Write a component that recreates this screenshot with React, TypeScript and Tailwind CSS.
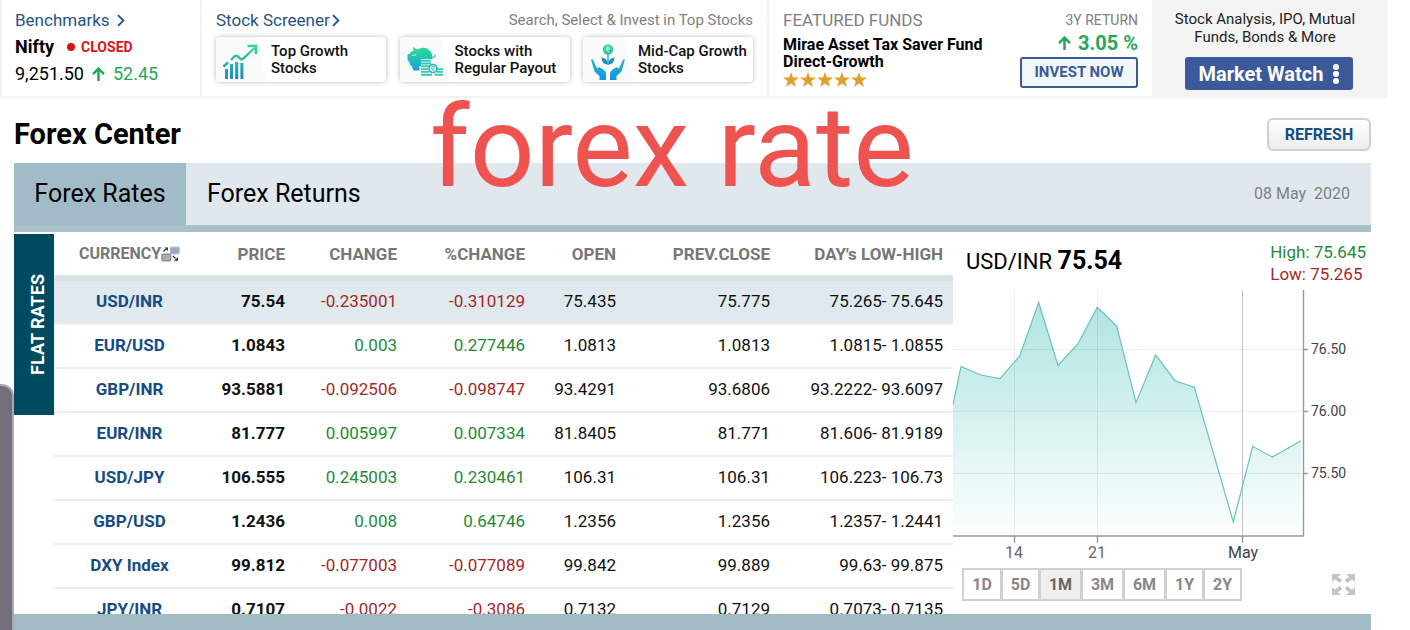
import React from "react";

type Row = [string, string, string, string, string, string, string];

const rows: Row[] = [
  ["USD/INR", "75.54", "-0.235001", "-0.310129", "75.435", "75.775", "75.265- 75.645"],
  ["EUR/USD", "1.0843", "0.003", "0.277446", "1.0813", "1.0813", "1.0815- 1.0855"],
  ["GBP/INR", "93.5881", "-0.092506", "-0.098747", "93.4291", "93.6806", "93.2222- 93.6097"],
  ["EUR/INR", "81.777", "0.005997", "0.007334", "81.8405", "81.771", "81.606- 81.9189"],
  ["USD/JPY", "106.555", "0.245003", "0.230461", "106.31", "106.31", "106.223- 106.73"],
  ["GBP/USD", "1.2436", "0.008", "0.64746", "1.2356", "1.2356", "1.2357- 1.2441"],
  ["DXY Index", "99.812", "-0.077003", "-0.077089", "99.842", "99.889", "99.63- 99.875"],
  ["JPY/INR", "0.7107", "-0.0022", "-0.3086", "0.7132", "0.7129", "0.7073- 0.7135"],
];

function Chevron() {
  return (
    <svg width="8" height="13" viewBox="0 0 8 13" fill="none" stroke="#1f5485" strokeWidth="1.8" aria-hidden="true">
      <path d="M1 1.2L6.4 6.5L1 11.8" />
    </svg>
  );
}

function UpArrow() {
  return (
    <svg width="13" height="14" viewBox="0 0 13 14" fill="none" stroke="#26a65b" strokeWidth="2.5" aria-hidden="true">
      <path d="M6.5 14V1.8M1 7.2L6.5 1.6L12 7.2" />
    </svg>
  );
}

function GrowthIcon() {
  return (
    <svg width="36" height="36" viewBox="0 0 36 36" fill="none" aria-hidden="true">
      <defs>
        <linearGradient id="growth" x1="0" y1="0" x2="0" y2="36" gradientUnits="userSpaceOnUse">
          <stop stopColor="#38dd90" />
          <stop offset="1" stopColor="#1b86cc" />
        </linearGradient>
      </defs>
      <g stroke="url(#growth)">
        <path d="M8 16L11.500 12.500Q13.500 11 15.500 13L17 14.500Q19 16.200 21 14L31.500 4" strokeWidth="2.400" />
        <path d="M24.500 2H33V10" strokeWidth="2.600" />
        <path d="M0.500 22.500L5 18.500" strokeWidth="2.400" />
        <path d="M3.500 25V35M8.500 20V35M13.700 18V35M18.900 19V35" strokeWidth="3" />
      </g>
    </svg>
  );
}

function PiggyIcon() {
  return (
    <svg width="38" height="32" viewBox="0 0 38 32" aria-hidden="true">
      <defs>
        <linearGradient id="piggy" x1="0" y1="0" x2="0" y2="25" gradientUnits="userSpaceOnUse">
          <stop stopColor="#2fe08f" />
          <stop offset="1" stopColor="#18a0dc" />
        </linearGradient>
      </defs>
      <path
        d="M6 1L10 3.500Q16 0.500 21 3Q25 5.500 25.500 11V13H14V20H12.500V24.500H6.500L5 20.500Q2.500 19 2.200 16L0.500 14V8.500L3 7.500Q4 5.500 6.500 4.500Z"
        fill="url(#piggy)"
      />
      <path d="M25 11Q28.500 12 28 8.500" stroke="#26bfa8" strokeWidth="1.200" fill="none" />
      <path d="M5 9Q7 10.500 9 8.500" stroke="#dffaf0" strokeWidth="1" fill="none" />
      <path
        d="M14 14.700H24M14 17.500H24M14 20.300H22M14 23.100H21M14 25.900H22.500M14 28.700H25M29.500 23.100H36M29.500 25.900H36M27.500 28.700H36"
        stroke="#33ccb4"
        strokeWidth="1.900"
      />
      <circle cx="26" cy="22.500" r="4" fill="#fafafa" stroke="#24bab6" strokeWidth="1.700" />
      <path d="M24.300 20.500H27.700M24.300 22.200H27.700M24.600 22.200L27 25" stroke="#25bcb4" strokeWidth="0.900" />
    </svg>
  );
}

function PlantIcon() {
  return (
    <svg width="36" height="36" viewBox="0 0 36 36" fill="none" aria-hidden="true">
      <defs>
        <linearGradient id="plant" x1="0" y1="0" x2="0" y2="36" gradientUnits="userSpaceOnUse">
          <stop stopColor="#35db93" />
          <stop offset="0.5" stopColor="#25b6b5" />
          <stop offset="1" stopColor="#1494e6" />
        </linearGradient>
      </defs>
      <circle cx="18" cy="5.500" r="5.200" fill="url(#plant)" />
      <path d="M16 3H20M16 5H20M16.300 5L19 8.500" stroke="#e6fbf3" strokeWidth="0.900" />
      <path d="M18 10V21" stroke="#25a8bd" strokeWidth="1.300" />
      <path d="M17.800 20.500Q11.500 20 11.500 13.500Q17.500 14 17.800 20.500ZM18.200 20.500Q18.500 14 24.500 13.500Q24.500 20 18.200 20.500Z" fill="#1e8fc6" />
      <g fill="url(#plant)">
        <path d="M1 15.500L3 15.500L6 22.500L7.500 24.500L9 23L13.500 25.500Q16 27.500 16 30V36H9.500V32L4.500 27.500Z" />
        <path d="M35 15.500L33 15.500L30 22.500L28.500 24.500L27 23L22.500 25.500Q20 27.500 20 30V36H26.500V32L31.500 27.500Z" />
      </g>
    </svg>
  );
}

function StockCard({ icon, lines }: { icon: React.ReactNode; lines: [string, string] }) {
  return (
    <a
      href="#"
      className="flex h-[45px] w-[170px] items-center overflow-hidden rounded bg-white text-[15px] leading-[17px] font-medium text-[#111] shadow-[0_0_5px_rgba(0,0,0,0.28)]"
    >
      <span className="flex h-full w-[55px] shrink-0 items-center bg-[#fafafa] pt-1 pl-[7px] [clip-path:polygon(0_0,75%_0,91%_100%,0_100%)]">
        {icon}
      </span>
      <span className="whitespace-nowrap">
        {lines[0]}
        <br />
        {lines[1]}
      </span>
    </a>
  );
}

function TopBar() {
  return (
    <header className="mr-[23px] flex h-[98px] shrink-0 border-b-2 border-l-2 border-[#f2f2f2]">
      <section className="w-[200px] shrink-0 border-r-2 border-[#f2f2f2] pt-[10px] pl-[13px]">
        <a href="#" className="flex items-center gap-[7px] text-[17px] leading-5 text-[#1f5485]">
          Benchmarks <Chevron />
        </a>
        <div className="mt-[7px] flex items-center leading-5">
          <strong className="text-lg leading-5 font-bold">Nifty</strong>
          <span className="ml-[13px] size-2 rounded-full bg-[#d81414]" />
          <span className="ml-[6px] text-sm font-bold text-[#d81414]">CLOSED</span>
        </div>
        <div className="mt-[7px] flex items-center gap-2 text-lg leading-5">
          <span>9,251.50</span>
          <UpArrow />
          <span className="text-[#26a65b]">52.45</span>
        </div>
      </section>
      <section className="flex-1 pt-[10px] pr-[14px] pl-[14px]">
        <div className="flex items-center justify-between">
          <a href="#" className="flex items-center gap-[2px] text-[17px] leading-5 text-[#1f5485]">
            Stock Screener <Chevron />
          </a>
          <span className="text-[15px] leading-5 text-[#808080]">Search, Select &amp; Invest in Top Stocks</span>
        </div>
        <div className="mt-[7px] flex justify-between">
          <StockCard icon={<GrowthIcon />} lines={["Top Growth", "Stocks"]} />
          <StockCard icon={<PiggyIcon />} lines={["Stocks with", "Regular Payout"]} />
          <StockCard icon={<PlantIcon />} lines={["Mid-Cap Growth", "Stocks"]} />
        </div>
      </section>
      <section className="flex w-[385px] shrink-0 justify-between border-l-2 border-[#f2f2f2] pt-[10px] pr-[14px] pl-[14px]">
        <div>
          <h2 className="text-[17px] leading-5 text-[#808080]">FEATURED FUNDS</h2>
          <p className="mt-[6px] text-base leading-[17px] font-bold whitespace-nowrap">
            Mirae Asset Tax Saver Fund
            <br />
            Direct-Growth
          </p>
          <svg className="mt-[2px]" width="84" height="16" viewBox="0 0 84 16" fill="#e0a02c" role="img" aria-label="5 stars">
            {[0, 17, 34, 51, 68].map((x) => (
              <path
                key={x}
                transform={`translate(${x} 0)`}
                d="M8 0L10 5.600H16L11.200 9.300L13 15L8 11.500L3 15L4.800 9.300L0 5.600H6Z"
              />
            ))}
          </svg>
        </div>
        <div className="flex flex-col items-end">
          <span className="text-sm leading-[21px] text-[#808080]">3Y RETURN</span>
          <span className="flex items-center gap-[7px] text-xl leading-6 font-bold text-[#26a65b]">
            <UpArrow /> 3.05 %
          </span>
          <button className="mt-[2px] h-[31px] w-[118px] rounded-[3px] border-2 border-[#3c5a94] bg-[#f2f7fe] text-[15px] font-bold text-[#3c5a94]">
            INVEST NOW
          </button>
        </div>
      </section>
      <section className="flex w-[235px] shrink-0 flex-col items-center bg-[#f3f3f3] pt-[10px] pr-[2px]">
        <p className="pr-[7px] text-center text-[15px] leading-[18px] text-[#222]">
          Stock Analysis, IPO, Mutual
          <br />
          Funds, Bonds &amp; More
        </p>
        <button className="mt-[11px] flex h-[33px] w-[168px] items-center justify-between rounded-[3px] bg-[#3c5a99] pr-[14px] pl-[14px] text-xl font-bold text-white">
          Market Watch
          <svg width="6" height="20" viewBox="0 0 6 20" fill="#fff" aria-hidden="true">
            <circle cx="3" cy="3" r="3" />
            <circle cx="3" cy="10" r="3" />
            <circle cx="3" cy="17" r="3" />
          </svg>
        </button>
      </section>
    </header>
  );
}

function SwapIcon() {
  return (
    <svg width="19" height="16" viewBox="0 0 19 16" aria-hidden="true">
      <rect x="9.500" y="1.200" width="8.600" height="6.600" rx="1" fill="#8fa9cf" stroke="#b5b9c0" strokeWidth="1.400" />
      <rect x="1" y="8.200" width="8.600" height="6.600" rx="1" fill="#b0b0b0" stroke="#8f8f8f" strokeWidth="1.400" />
      <path d="M2.500 5.500L5 3M12 10L14.500 12.500" stroke="#333" strokeWidth="1.200" fill="none" />
      <path d="M3.500 1.500H7V5ZM17 11V14.800H13Z" fill="#333" />
    </svg>
  );
}

function RatesTable() {
  return (
    <table className="w-full table-fixed border-collapse text-right text-[17px] leading-5">
      <colgroup>
        <col className="w-[151px]" />
        <col className="w-[90px]" />
        <col className="w-[112px]" />
        <col className="w-[128px]" />
        <col className="w-[91px]" />
        <col className="w-[154px]" />
        <col className="w-[173px]" />
      </colgroup>
      <thead>
        <tr className="h-[43px] text-base leading-5 text-[#777]">
          <th className="p-0 font-bold">
            <span className="flex items-center justify-center">
              CURRENCY
              <SwapIcon />
            </span>
          </th>
          {["PRICE", "CHANGE", "%CHANGE", "OPEN", "PREV.CLOSE", "DAY's LOW-HIGH"].map((h) => (
            <th key={h} className="p-0 pr-[10px] text-[17px] font-bold whitespace-nowrap">
              {h}
            </th>
          ))}
        </tr>
      </thead>
      <tbody>
        {rows.map((r, i) => {
          const tone = r[2].startsWith("-") ? "text-[#a52828]" : "text-[#248a36]";
          return (
            <tr
              key={r[0]}
              className={
                i === 0
                  ? "h-12 bg-[#e0e9ee] shadow-[inset_0_6px_0_#d9e3e5]"
                  : "h-11 shadow-[inset_0_2px_0_#eeeeee]"
              }
            >
              <td className={i === 0 ? "p-0 pt-1 text-center" : "p-0 text-center"}>
                <a href="#" className="font-bold text-[#164c84]">
                  {r[0]}
                </a>
              </td>
              {r.slice(1).map((v, c) => (
                <td
                  key={c}
                  className={`p-0 pr-[10px] whitespace-nowrap ${i === 0 ? "pt-1" : ""} ${c === 0 ? "font-bold" : ""} ${c === 1 || c === 2 ? tone : "text-[#111]"}`}
                >
                  {v}
                </td>
              ))}
            </tr>
          );
        })}
      </tbody>
    </table>
  );
}

const line =
  "0,115 8,76.5 27.7,85 47,88.7 66.7,66 85.7,12.500 105,75.500 125,53.700 144.300,17.300 163.700,36 183,112.700 202.700,65 222,90.700 241.300,97.300 280.300,232 299.700,156.300 319.300,167 348,150.700";

function RateChart() {
  return (
    <svg className="block" width="418" height="275" viewBox="0 0 418 275" fontFamily="Roboto" role="img" aria-label="USD/INR over one month">
      <defs>
        <linearGradient id="area" x1="0" y1="0" x2="0" y2="246" gradientUnits="userSpaceOnUse">
          <stop stopColor="#abe3df" />
          <stop offset="1" stopColor="#fdfffe" />
        </linearGradient>
      </defs>
      <polygon points={`0,246 ${line} 348,246`} fill="url(#area)" />
      <g stroke="#000" strokeOpacity="0.07">
        <path d="M0 59.500H350M0 121.500H350M0 183.500H350M61.500 0V246M144.500 0V246" />
      </g>
      <path d="M289.500 0V252" stroke="#c4c4c4" />
      <polyline points={line} fill="none" stroke="#6bc0bf" strokeWidth="1.200" />
      <path d="M0 246H350.500V0M61.500 246V253M144.500 246V253M289.500 246V253M350 59.500H355M350 121.500H355M350 183.500H355" fill="none" stroke="#999" strokeWidth="1.400" />
      <g fontSize="14" fill="#444">
        <text x="358" y="64">76.50</text>
        <text x="358" y="126">76.00</text>
        <text x="358" y="188">75.50</text>
      </g>
      <g fontSize="16" fill="#666" textAnchor="middle">
        <text x="61" y="268">14</text>
        <text x="144" y="268">21</text>
        <text x="290" y="268" fill="#444">May</text>
      </g>
    </svg>
  );
}

const ranges = [
  { label: "1D", width: "w-[40px]" },
  { label: "5D", width: "w-[39px]" },
  { label: "1M", width: "w-[43px]" },
  { label: "3M", width: "w-[43px]" },
  { label: "6M", width: "w-[43px]" },
  { label: "1Y", width: "w-[39px]" },
  { label: "2Y", width: "w-[39px]" },
];

function ChartPanel() {
  return (
    <aside className="w-[418px] shrink-0">
      <div className="flex h-[58px] items-start justify-between pt-[9px] pr-[5px] pl-[13px]">
        <h2 className="pt-1 text-[22px] leading-8">
          USD/INR <strong className="text-[25px] font-bold">75.54</strong>
        </h2>
        <div className="text-[17px] leading-[22px]">
          <p className="text-[#248a36]">High: 75.645</p>
          <p className="text-[#a52828]">Low: 75.265</p>
        </div>
      </div>
      <RateChart />
      <div className="mt-[3px] flex items-center justify-between pr-4 pl-[9px]">
        <div className="flex">
          {ranges.map((r, i) => (
            <button
              key={r.label}
              className={`${r.width} -mr-px h-[33px] border-2 border-[#d0d0d0] text-base font-bold ${i === 2 ? "bg-[#efefef] text-[#666]" : "bg-white text-[#888]"}`}
            >
              {r.label}
            </button>
          ))}
        </div>
        <button aria-label="Expand chart">
          <svg width="23" height="21" viewBox="0 0 23 21" fill="#c4c4c4" stroke="#c4c4c4" strokeWidth="4" aria-hidden="true">
            <path d="M3 3L9 7.500M20 3L14 7.500M3 18L9 13.500M20 18L14 13.500" />
            <path stroke="none" d="M0 0H9L0 8ZM23 0H14L23 8ZM0 21H9L0 13ZM23 21H14L23 13Z" />
          </svg>
        </button>
      </div>
    </aside>
  );
}

export default function App() {
  return (
    <div className="relative flex h-screen flex-col overflow-hidden bg-white font-[Roboto,sans-serif] text-black">
      <TopBar />
      <main className="mr-[39px] ml-[14px] flex min-h-0 flex-1 flex-col">
        <div className="flex h-[65px] shrink-0 items-center justify-between pt-2">
          <h1 className="text-[29px] font-bold">Forex Center</h1>
          <button className="h-[33px] w-[104px] rounded-md border-2 border-[#cfcfcf] bg-gradient-to-b from-white to-[#ececec] text-base font-bold text-[#164c84]">
            REFRESH
          </button>
        </div>
        <nav className="flex h-[69px] shrink-0 items-stretch border-b-[7px] border-[#a8c0c8] bg-[#e0e8ee] text-[25px]">
          <button className="w-[172px] bg-[#a2bcc7]">Forex Rates</button>
          <button className="px-[21px]">Forex Returns</button>
          <span className="ml-auto self-center pr-[21px] text-base text-[#808080]">08 May&nbsp; 2020</span>
        </nav>
        <div className="flex min-h-0 flex-1 items-start overflow-hidden">
          <button className="mt-[2px] flex h-[181px] w-10 shrink-0 items-center justify-center bg-[#004b60] pl-2 text-lg font-bold text-white">
            <span className="rotate-180 [writing-mode:vertical-rl]">FLAT RATES</span>
          </button>
          <div className="min-w-0 flex-1">
            <RatesTable />
          </div>
          <ChartPanel />
        </div>
        <div className="h-4 shrink-0 bg-[#a2bcc6]" />
      </main>
      <p className="pointer-events-none absolute top-[80px] left-[430px] text-[114px] leading-[134px] whitespace-nowrap text-[#ef5350]">
        forex rate
      </p>
      <div className="absolute bottom-0 left-0 h-[246px] w-[14px] rounded-tr-xl border-t-2 border-r-2 border-[#aaa8b0] bg-[#736f7c]" />
    </div>
  );
}
